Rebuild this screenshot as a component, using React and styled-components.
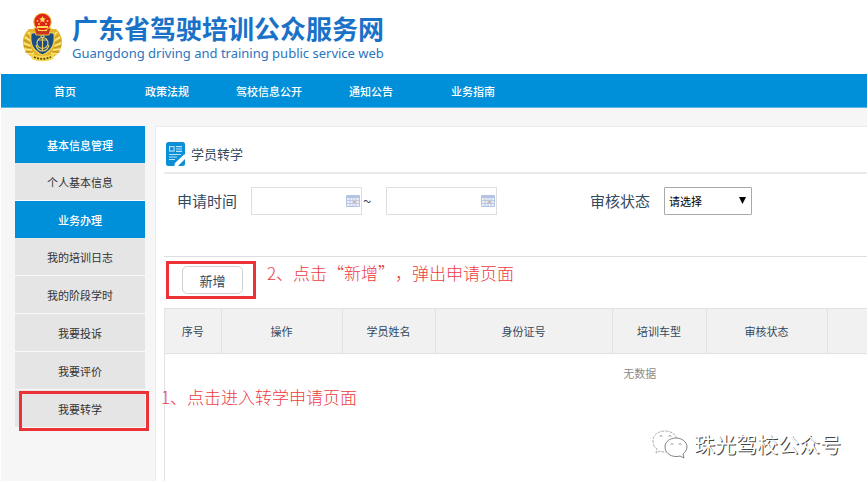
import React from "react";
import styled, { createGlobalStyle, css } from "styled-components";

const GlobalStyle = createGlobalStyle`
  * {
    box-sizing: border-box;
  }

  body {
    margin: 0;
    background: #fff;
    color: #34495e;
    font-family: "Noto Sans CJK SC", sans-serif;
    font-size: 11px;
  }

  button, input, select {
    font-family: inherit;
  }
`;

const Page = styled.div`
  position: relative;
  display: flex;
  flex-direction: column;
  min-height: 100vh;
  padding: 0 1px 2px;
  overflow: hidden;
`;

const Header = styled.header`
  display: flex;
  gap: 9px;
  height: 74px;
  padding: 12px 0 0 21px;
`;

const SiteName = styled.h1`
  margin: 0;
  color: #1a72c8;
  font-size: 26px;
  font-weight: 700;
  line-height: 32px;
`;

const SiteNameEn = styled.p`
  margin: 0;
  color: #2a75c0;
  font-family: "Noto Sans", sans-serif;
  font-size: 13px;
  line-height: 18px;
`;

const Nav = styled.nav`
  display: flex;
  height: 34px;
  padding-left: 13px;
  background: #008fd9;
  border-bottom: 1px solid #5cb6e6;
`;

const NavLink = styled.a`
  width: 102px;
  color: #fff;
  font-weight: 500;
  line-height: 34px;
  text-align: center;
  text-decoration: none;
`;

const Main = styled.main`
  display: flex;
  flex: 1;
  gap: 10px;
  padding: 18px 0 0 14px;
  background: #f6f6f6;
`;

const SideMenu = styled.ul`
  flex: 0 0 130px;
  margin: 0;
  padding: 0;
  list-style: none;
`;

const MenuGroup = styled.li`
  height: 37px;
  background: #008fd9;
  color: #fff;
  font-weight: 500;
  line-height: 38px;
  text-align: center;
`;

const MenuItem = styled.li`
  position: relative;
  height: 38px;
  background: #e5e5e5;
  border-bottom: 1px solid #fafafa;
  text-align: center;
`;

const MenuLink = styled.a`
  display: block;
  color: #333;
  line-height: 38px;
  text-decoration: none;
`;

const Panel = styled.section`
  display: flex;
  flex: 1;
  flex-direction: column;
  min-width: 0;
  padding-left: 8px;
  background: #fff;
  border: 1px solid #ececec;
  border-width: 1px 0 0 1px;
`;

const PanelHead = styled.div`
  display: flex;
  align-items: center;
  gap: 5px;
  height: 47px;
  padding: 8px 0 0 2px;
  border-bottom: 2px solid #e8eaec;
`;

const PanelTitle = styled.h2`
  margin: 0;
  font-size: 13px;
  font-weight: 400;
`;

const Filters = styled.form`
  display: flex;
  align-items: flex-start;
  height: 83px;
  padding: 13px 0 0 13px;
  border-bottom: 1px solid #dcdfe2;
`;

const Label = styled.label`
  margin-right: 14px;
  font-size: 15px;
  line-height: 28px;
  white-space: nowrap;
`;

const Tilde = styled.span`
  width: 24px;
  padding-left: 1px;
  font-size: 15px;
  line-height: 28px;
`;

const DateBox = styled.div`
  position: relative;
  width: 111px;
`;

const DateInput = styled.input`
  display: block;
  width: 100%;
  height: 28px;
  padding: 0 24px 0 6px;
  background: #fff;
  border: 1px solid #dcdfe2;
  font-size: 11px;
`;

const DateIcon = styled.svg`
  position: absolute;
  top: 8px;
  right: 2px;
  pointer-events: none;
`;

const StatusField = styled.div`
  display: flex;
  margin-left: 93px;
`;

const SelectBox = styled.div`
  position: relative;
  width: 88px;
`;

const Select = styled.select`
  display: block;
  width: 100%;
  height: 28px;
  padding: 0 16px 0 4px;
  appearance: none;
  background: #fff;
  border: 1px solid #a9a9a9;
  border-radius: 1px;
  color: #000;
  font-size: 11px;
`;

const SelectArrow = styled.svg`
  position: absolute;
  top: 10px;
  right: 6px;
  pointer-events: none;
`;

const Toolbar = styled.div`
  display: flex;
  align-items: flex-start;
  height: 51px;
  padding: 9px 0 0 18px;
`;

const AddWrap = styled.div`
  position: relative;
`;

const AddButton = styled.button`
  display: block;
  width: 61px;
  height: 28px;
  padding: 0;
  background: #fff;
  border: 1px solid #ccd2d8;
  border-radius: 5px;
  color: #34495e;
  font-size: 13px;
`;

const Marker = styled.span`
  position: absolute;
  border: 3px solid #ec3237;
  pointer-events: none;

  ${({ $target }) =>
    $target === "button"
      ? css`
          inset: -5px -13px -5px -16px;
        `
      : css`
          inset: 1px -4px -4px 4px;
        `}
`;

const Note = styled.span`
  position: absolute;
  z-index: 1;
  top: -5px;
  left: 100%;
  margin-left: ${({ $target }) => ($target === "button" ? "24px" : "16px")};
  color: #ee3c42;
  font-size: 17px;
  font-weight: 300;
  line-height: 24px;
  text-spacing-trim: space-all;
  white-space: nowrap;
`;

const TableWrap = styled.div`
  flex: 1;
  overflow: hidden;
  border-left: 1px solid #e0e2e4;
`;

const Table = styled.table`
  width: 100%;
  min-width: 950px;
  border-collapse: collapse;
  table-layout: fixed;
`;

const Th = styled.th`
  width: ${({ $width }) => ($width ? `${$width}px` : "auto")};
  height: 45px;
  padding: 0;
  background: #f1f1f1;
  border: 1px solid #dfe1e3;
  border-left: 0;
  font-weight: 400;
`;

const EmptyCell = styled.td`
  height: 38px;
  padding: 0;
  color: #8a8a8a;
  text-align: center;
`;

const Watermark = styled.div`
  position: absolute;
  right: 27px;
  bottom: 20px;
  display: flex;
  align-items: center;
  gap: 6px;
  color: #fff;
  font-size: 21px;
  line-height: 32px;
  text-shadow: 1px 1px 0 #444;
`;

const WatermarkText = styled.span`
  padding-bottom: 4px;
`;

const navItems = ["首页", "政策法规", "驾校信息公开", "通知公告", "业务指南"];

const menu = [
  { title: "基本信息管理", items: ["个人基本信息"] },
  {
    title: "业务办理",
    items: ["我的培训日志", "我的阶段学时", "我要投诉", "我要评价", "我要转学"]
  }
];

const columns = [
  { name: "序号", width: 56 },
  { name: "操作", width: 121 },
  { name: "学员姓名", width: 93 },
  { name: "身份证号", width: 177 },
  { name: "培训车型", width: 94 },
  { name: "审核状态", width: 121 },
  { name: "" }
];

const Emblem = () => (
  <svg width="41" height="50" viewBox="0 0 41 50" aria-hidden="true">
    {/* wreath */}
    <path
      d="M7 17C1 22-1 31 3 38c2 5 8 9 17.500 10C30 47 36 43 38 38c4-7 2-16-4-21z"
      fill="#e3b528"
    />
    <path
      d="M6 20l4 4M3 25l6 4M1.500 31l7 3M2 37l8 1M5 42l7-1M35 20l-4 4M38 25l-6 4M39.500 31l-7 3M39 37l-8 1M36 42l-7-1"
      stroke="#fbe98a"
      strokeWidth="1.600"
    />
    <path
      d="M4 23l5 4M2 28l6 3M2 34l7 2M3 40l8 0M37 23l-5 4M39 28l-6 3M39 34l-7 2M38 40l-8 0"
      stroke="#a87d12"
      strokeWidth="0.700"
    />
    {/* shield */}
    <path
      d="M9 21c4 0 7-2 11.500-2S28 21 32 21c1 9 0 17-11.500 22C9 38 8 30 9 21z"
      fill="#1c4d85"
      stroke="#f2cf4c"
      strokeWidth="1.300"
    />
    <g fill="none" stroke="#e9cf62" strokeWidth="1.200">
      <circle cx="20.500" cy="31" r="5.500" />
      <circle cx="20.500" cy="24.500" r="1.500" />
      <path d="M20.500 26v13M16 28h9M14 33c1 4 3 6 6.500 6s5.500-2 6.500-6" />
    </g>
    {/* red cap with the stars */}
    <path d="M12 16h17l-2 7H14z" fill="#c9351e" stroke="#eabf35" />
    <circle cx="20.500" cy="10" r="8.700" fill="#df2318" stroke="#f0bd35" />
    <path
      d="M20.500 4l1 2.200 2.400.2-1.800 1.600.5 2.400-2.100-1.200-2.100 1.200.5-2.400-1.800-1.600 2.400-.2z"
      fill="#ffe05a"
    />
    <g fill="#ffd94f">
      <circle cx="15.500" cy="9" r="0.900" />
      <circle cx="25.500" cy="9" r="0.900" />
      <circle cx="17" cy="12" r="0.900" />
      <circle cx="24" cy="12" r="0.900" />
      <path d="M15 14h11v2H15zM16 18h9v1h-9z" />
    </g>
    {/* ribbon */}
    <path d="M8 41c8 4 17 4 25 0l-2 6c-6 3-15 3-21 0z" fill="#f5d84a" />
    <path
      d="M12 45c6 2.500 11 2.500 17 0"
      fill="none"
      stroke="#6a4c0c"
      strokeWidth="1.800"
      strokeDasharray="2 1.200"
    />
  </svg>
);

const FormIcon = () => (
  <svg width="20" height="26" viewBox="0 0 20 26" aria-hidden="true">
    <rect y="1" width="19" height="24" rx="2.500" fill="#0b8fd6" />
    <g fill="none" stroke="#b9e2f8" strokeWidth="1.100">
      <rect x="3.600" y="5.600" width="4.500" height="4.500" />
      <path d="M10 5.600h6M10 8h6M10 10.400h6M3 13.500h12M3 16h8M3 18.500h6" />
    </g>
    {/* pen */}
    <path d="M20 13.500v3.500L12 25l-4 1.500 1-4.500 9-8.500z" fill="#fff" />
  </svg>
);

const CalendarIcon = () => (
  <DateIcon width="14" height="12" viewBox="0 0 14 12" aria-hidden="true">
    <rect width="14" height="12" rx="1" fill="#b4c3e2" />
    <path d="M1 3h12v8H1z" fill="#e9eef8" />
    <path
      d="M1 5.500h12M1 8.500h12M4 3v8M7 3v8M10 3v8"
      stroke="#b4c1dd"
      strokeWidth="0.800"
    />
    <rect x="7.500" y="6" width="2" height="2" fill="#dba58c" />
  </DateIcon>
);

const ChatIcon = () => (
  <svg width="36" height="30" viewBox="0 0 36 30" aria-hidden="true">
    <g fill="none" stroke="#999" strokeWidth="0.800">
      <path
        d="M25 9C23 3 18 1 13 1 6 1 1 5 1 11c0 3 1 6 4 8l-1 4 4-2c2 1 4 1 6 1"
        strokeDasharray="3 1"
      />
      <path
        d="M24 8c6 0 11 4 11 9 0 3-2 5-4 7l1 4-4-2c-1 .5-3 .5-4 .5-6 0-11-4-11-9.500S18 8 24 8z"
        fill="#fff"
        stroke="#666"
      />
    </g>
    <path
      d="M8 6.500l1-1 1 1M17 6.500l1-1 1 1M19 14.500l1-1 1 1M27 14.500l1-1 1 1"
      fill="none"
      stroke="#555"
      strokeWidth="0.900"
    />
  </svg>
);

const DateField = ({ id, label }) => (
  <DateBox>
    <DateInput id={id} type="text" aria-label={label} />
    <CalendarIcon />
  </DateBox>
);

const Sidebar = () => (
  <SideMenu>
    {menu.map(({ title, items }) => (
      <React.Fragment key={title}>
        <MenuGroup>{title}</MenuGroup>
        {items.map(item => (
          <MenuItem key={item}>
            <MenuLink href="#">{item}</MenuLink>
            {item === "我要转学" && (
              <React.Fragment>
                <Marker $target="menu" />
                <Note $target="menu">1、点击进入转学申请页面</Note>
              </React.Fragment>
            )}
          </MenuItem>
        ))}
      </React.Fragment>
    ))}
  </SideMenu>
);

const SearchForm = () => (
  <Filters>
    <Label htmlFor="start">申请时间</Label>
    <DateField id="start" />
    <Tilde>~</Tilde>
    <DateField id="end" label="申请时间" />
    <StatusField>
      <Label htmlFor="status">审核状态</Label>
      <SelectBox>
        <Select id="status">
          <option>请选择</option>
        </Select>
        <SelectArrow width="7" height="7" viewBox="0 0 7 7">
          <path d="M0 0h7L3.500 7z" fill="#000" />
        </SelectArrow>
      </SelectBox>
    </StatusField>
  </Filters>
);

const StudentTable = () => (
  <TableWrap>
    <Table>
      <thead>
        <tr>
          {columns.map(({ name, width }, index) => (
            <Th key={index} $width={width}>
              {name}
            </Th>
          ))}
        </tr>
      </thead>
      <tbody>
        <tr>
          <EmptyCell colSpan={columns.length}>无数据</EmptyCell>
        </tr>
      </tbody>
    </Table>
  </TableWrap>
);

const App = () => (
  <Page>
    <GlobalStyle />
    <Header>
      <Emblem />
      <div>
        <SiteName>广东省驾驶培训公众服务网</SiteName>
        <SiteNameEn>Guangdong driving and training public service web</SiteNameEn>
      </div>
    </Header>
    <Nav>
      {navItems.map(item => (
        <NavLink key={item} href="#">
          {item}
        </NavLink>
      ))}
    </Nav>
    <Main>
      <Sidebar />
      <Panel>
        <PanelHead>
          <FormIcon />
          <PanelTitle>学员转学</PanelTitle>
        </PanelHead>
        <SearchForm />
        <Toolbar>
          <AddWrap>
            <AddButton type="button">新增</AddButton>
            <Marker $target="button" />
            <Note $target="button">2、点击“新增”，弹出申请页面</Note>
          </AddWrap>
        </Toolbar>
        <StudentTable />
      </Panel>
    </Main>
    <Watermark>
      <ChatIcon />
      <WatermarkText>珠光驾校公众号</WatermarkText>
    </Watermark>
  </Page>
);

export default App;
